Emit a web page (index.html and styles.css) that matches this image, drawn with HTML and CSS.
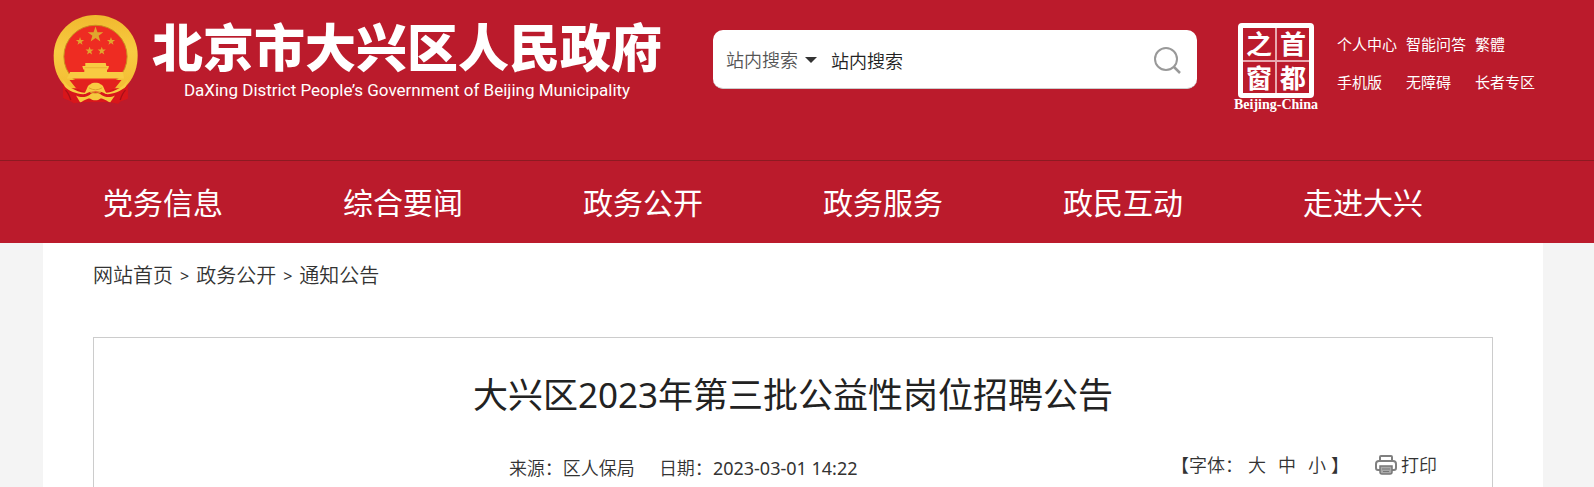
FILE: index.html
```html
<!DOCTYPE html>
<html lang="zh-CN">
<head>
<meta charset="utf-8">
<meta name="viewport" content="width=device-width, initial-scale=1">
<title>大兴区2023年第三批公益性岗位招聘公告</title>
<link rel="stylesheet" href="styles.css">
</head>
<body>
<header class="header">
  <div class="container masthead">
    <a class="brand" href="#">
      <svg class="emblem" viewBox="12 16 258 274" aria-hidden="true">
        <defs>
          <linearGradient id="gold" x1="0" y1="0" x2="0" y2="1">
            <stop offset="0" stop-color="#f0b92e"/><stop offset=".5" stop-color="#f8cb42"/><stop offset="1" stop-color="#f3bd33"/>
          </linearGradient>
          <path id="star" d="M0-10 2.400-3.200 9.500-3.100 3.800 1.200 5.900 8.100 0 4-5.900 8.100-3.800 1.200-9.500-3.100-2.400-3.200z"/>
        </defs>
        <path d="M42 200 43 270 62 274 74 286 102 282H182L210 287 220 276 238 272 240 200z" fill="#d8161b"/>
        <path d="M141 18c72 0 128 54 128 122 0 36-10 62-27 84l-14 16H54l-14-16C23 202 14 176 14 142 14 72 70 18 141 18z" fill="url(#gold)"/>
        <ellipse cx="141" cy="144" rx="96" ry="95" fill="#ee2c22" stroke="#c98e1e" stroke-width="3"/>
        <g fill="#e0a62e">
          <use href="#star" transform="translate(141 78) scale(2.500)"/>
          <use href="#star" transform="translate(94 98) scale(1.300)"/>
          <use href="#star" transform="translate(188 98) scale(1.300)"/>
          <use href="#star" transform="translate(123 127) scale(1.300)"/>
          <use href="#star" transform="translate(160 127) scale(1.300)"/>
        </g>
        <path d="M110 164h62l2 9h8l-3 10h-3v8h48l4 20H54l10-20h43v-8h-3l-3-10h9z" fill="#f8cb42"/>
        <path d="M108 178h68" stroke="#e2a32b" stroke-width="2"/>
        <path d="M62 215h158l-20 25-32 14-27-30-27 30-32-14z" fill="#e3211e"/>
        <path d="M40 212c14 22 40 38 68 42 8-9 7-23 18-26 6-6 24-6 30 0 11 3 10 17 18 26 28-4 54-20 68-42l-10 24c-18 16-42 24-60 22-10-10-50-10-62 0-24 2-48-8-62-22z" fill="#f8cb42"/>
        <path d="M42 236q20 22 48 28l-14 20-33-14zM240 236q-20 22-48 28l14 20 33-12z" fill="#d8161b"/>
        <path d="M50 246q10 10 16 30M232 246q-10 10-16 30" fill="none" stroke="#a80f18" stroke-width="4"/>
        <path d="M82 262c14 8 30 6 42-2 6-8 26-8 34 0 12 8 28 10 42 2l-14 21c-12-4-18-12-30-12-8 8-22 8-32 0-12 0-18 8-30 12z" fill="#f6c83e"/>
        <path d="M121 239q20 12 40 0M124 252q17 8 34 0" fill="none" stroke="#dba02a" stroke-width="3"/>
      </svg>
      <span class="brand-text">
        <span class="brand-cn">北京市大兴区人民政府</span>
        <span class="brand-en">DaXing District People’s Government of Beijing Municipality</span>
      </span>
    </a>
    <form class="search" role="search">
      <div class="scope">
        <select class="scope-select" aria-label="搜索范围"><option>站内搜索</option></select>
        <svg class="caret" viewBox="0 0 12 6" aria-hidden="true"><path d="M0 0h12L6 6z" fill="#333"/></svg>
      </div>
      <input class="search-input" type="text" aria-label="搜索内容" value="站内搜索">
      <button class="search-button" type="button" aria-label="搜索">
        <svg viewBox="0 0 28 28" width="28" height="28" aria-hidden="true"><circle cx="13" cy="13" r="11" fill="none" stroke="#999" stroke-width="2"/><path d="M20.500 20.500 27 27" stroke="#999" stroke-width="2.500"/></svg>
      </button>
    </form>
    <a class="seal" href="#">
      <span class="seal-grid"><span>之</span><span>首</span><span>窗</span><span>都</span></span>
      <span class="seal-caption">Beijing-China</span>
    </a>
    <nav class="quick" aria-label="快捷链接">
      <a href="#">个人中心</a><a href="#">智能问答</a><a href="#">繁體</a>
      <a href="#">手机版</a><a href="#">无障碍</a><a href="#">长者专区</a>
    </nav>
  </div>
  <nav class="main-nav" aria-label="主导航">
    <div class="container nav-list">
      <a href="#">党务信息</a><a href="#">综合要闻</a><a href="#">政务公开</a><a href="#">政务服务</a><a href="#">政民互动</a><a href="#">走进大兴</a>
    </div>
  </nav>
</header>
<main class="container page">
  <nav class="crumbs" aria-label="当前位置"><a href="#">网站首页</a><span>&gt;</span><a href="#">政务公开</a><span>&gt;</span><a href="#">通知公告</a></nav>
  <article class="article">
    <h1 class="title">大兴区2023年第三批公益性岗位招聘公告</h1>
    <div class="meta">
      <p class="source"><span>来源：区人保局</span><span>日期：<time class="date">2023-03-01 14:22</time></span></p>
      <div class="tools">
        <div class="sizes"><span>【字体：</span><div class="size-buttons"><button type="button">大</button><button type="button">中</button><button type="button">小</button></div><span>】</span></div>
        <button class="print" type="button">
          <svg viewBox="0 0 22 20" width="22" height="20" aria-hidden="true"><g fill="none" stroke="#808080" stroke-width="2"><path d="M5 6V2q0-1 1-1h10q1 0 1 1v4"/><path d="M5 15H3q-2 0-2-2V9q0-3 3-3h14q3 0 3 3v4q0 2-2 2h-2"/></g><path d="M5 11h12v6q0 2-2 2H7q-2 0-2-2z" fill="#aaa" stroke="#777" stroke-width="1.500"/><path d="M7 14h8M8 16.500h6" stroke="#777"/></svg>
          <span>打印</span>
        </button>
      </div>
    </div>
  </article>
</main>
</body>
</html>
```

FILE: styles.css
```css
* { box-sizing: border-box; }

body {
  margin: 0;
  background: #f4f4f4;
  color: #333;
  font-family: "Noto Sans", "Noto Sans CJK SC", sans-serif;
  font-size: 18px;
  font-weight: 350;
  line-height: 24px;
}

a { color: inherit; text-decoration: none; }

button, input, select {
  margin: 0;
  padding: 0;
  border: 0;
  background: none;
  color: inherit;
  font: inherit;
}

button { cursor: pointer; }

.header { background: #bb1b2c; color: #fff; }

.container {
  width: calc(100% - 8px);
  max-width: 1500px;
  margin-left: max(0px, calc(50% - 754px));
}

.masthead {
  display: flex;
  align-items: flex-start;
  min-height: 160px;
  padding: 14px 0 0 10px;
}

.brand { display: flex; gap: 14px; }
.emblem { width: 85px; height: 91px; }
.brand-text { display: flex; flex-direction: column; align-items: center; }
.brand-cn {
  font-family: "Noto Sans CJK SC", sans-serif;
  font-size: 51px;
  font-weight: 900;
  line-height: 62px;
  white-space: nowrap;
}
.brand-en {
  font-family: Roboto, sans-serif;
  font-size: 17px;
  font-weight: 400;
  line-height: 28px;
  white-space: nowrap;
}

.search {
  display: flex;
  flex: 1;
  align-items: center;
  min-width: 300px;
  height: 59px;
  margin: 16px 37px 0 51px;
  padding: 1px 16px 0 13px;
  border-bottom: 1px solid #ccc;
  border-radius: 10px;
  background: #fff;
}
.scope { position: relative; color: #555; }
.scope-select { width: 93px; height: 36px; appearance: none; }
.caret { position: absolute; right: 2px; top: 15px; width: 12px; height: 6px; pointer-events: none; }
.search-input { flex: 1; min-width: 0; height: 36px; margin-left: 12px; color: #222; }
.search-button { display: flex; }

.seal { display: flex; flex-direction: column; align-items: center; width: 84px; padding-top: 9px; }
.seal-grid {
  display: grid;
  grid-template-columns: 1fr 1fr;
  grid-template-rows: 1fr 1fr;
  gap: 2px;
  width: 76px;
  height: 75px;
  border: 5px solid #fff;
  border-radius: 4px;
  background: #e9a9af;
  font-family: "Noto Sans CJK SC", sans-serif;
  font-size: 26px;
  font-weight: 700;
  line-height: 30px;
  text-align: center;
}
.seal-grid span { background: #bb1b2c; }
.seal-caption {
  font-family: "Liberation Serif", serif;
  font-size: 14px;
  font-weight: 700;
  line-height: 14px;
  white-space: nowrap;
}

.quick {
  display: grid;
  grid-template-columns: 69px 69px 68px;
  row-gap: 14px;
  margin: 18px 0 0 19px;
  font-size: 15px;
  font-weight: 400;
  white-space: nowrap;
}

.main-nav { border-top: 1px solid #8d1a22; }
.nav-list { display: flex; padding: 2px 60px 0 0; }
.nav-list a {
  flex: 1;
  font-size: 30px;
  font-weight: 400;
  line-height: 80px;
  text-align: center;
}

.page { min-height: 244px; padding: 21px 50px 0; background: #fff; }
.crumbs { display: flex; gap: 7px; font-size: 20px; }
.crumbs span { font-size: 16px; font-weight: 400; }
.article { margin-top: 49px; padding: 33px 55px 0; border: 1px solid #ccc; border-bottom: 0; }
.title {
  margin: 0;
  color: #222;
  font-size: 35px;
  font-weight: 400;
  line-height: 48px;
  text-align: center;
}
.meta {
  display: flex;
  align-items: flex-start;
  justify-content: space-between;
  min-height: 34px;
  margin-top: 34px;
  white-space: nowrap;
}
.source { display: flex; gap: 24px; margin: 3px 0 0 26%; padding-left: 25px; }
.date { font-weight: 400; }
.tools { display: flex; gap: 26px; }
.sizes, .size-buttons { display: flex; }
.sizes { gap: 5px; }
.size-buttons { gap: 12px; }
.print { display: flex; align-items: center; gap: 4px; }
```
